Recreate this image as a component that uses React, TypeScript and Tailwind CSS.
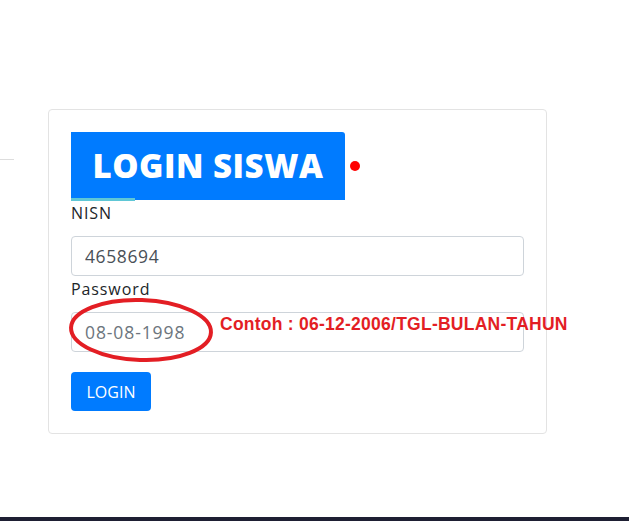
import React from 'react';

const sans = { fontFamily: '"Open Sans", "Noto Sans", sans-serif' };

function Field({ label, children }: { label: string; children: React.ReactNode }) {
  return (
    <div>
      <label className="block text-[16px] leading-[24px] tracking-[0.9px] text-[#212529] mb-[11px]">{label}</label>
      {children}
    </div>
  );
}

export default function App() {
  return (
    <div className="h-[521px] flex flex-col bg-white" style={sans}>
      <div className="flex items-start pt-[109px]">
        <div className="mt-[50px] w-[14px] h-px bg-[#dddddd]" />
        <div className="ml-[34px] w-[499px] border border-[#e3e3e3] rounded-[4px] px-[22px] pt-[22px] pb-[22px]">
          <div className="flex items-center">
            <div className="relative w-[274px] h-[68px] bg-[#007bff] rounded-tr-[3px] flex items-center justify-center">
              <h1 className="text-white text-[33px] font-extrabold tracking-[0.5px]">LOGIN SISWA</h1>
              <span className="absolute left-0 bottom-[-1px] w-[64px] h-[3px] bg-[#5fc7d6]" />
            </div>
            <span className="ml-[5px] w-[10px] h-[10px] rounded-full bg-[#ff0000]" />
          </div>

          <div className="mt-[1px]">
            <Field label="NISN">
              <input
                readOnly
                value="4658694"
                className="w-[453px] h-[40px] border border-[#ced4da] rounded-[4px] px-[13px] text-[17.5px] tracking-[0.6px] text-[#495057] outline-none"
              />
            </Field>
          </div>

          <div className="mt-[1px]">
            <Field label="Password">
              <div className="relative">
                <input
                  readOnly
                  placeholder="08-08-1998"
                  className="w-[453px] h-[40px] border border-[#ced4da] rounded-[4px] px-[13px] text-[17.5px] tracking-[0.9px] text-[#495057] placeholder:text-[#6c757d] outline-none"
                />
                <svg className="absolute left-[-4px] top-[-16px]" width="148" height="68" viewBox="0 0 148 68">
                  <ellipse
                    cx="74"
                    cy="34"
                    rx="70"
                    ry="30"
                    fill="none"
                    stroke="#e31e24"
                    strokeWidth="4"
                    transform="rotate(2 74 34)"
                  />
                </svg>
                <span
                  className="absolute left-[149px] top-[2px] text-[17.5px] leading-[20px] tracking-[0.25px] font-bold text-[#e31e24] whitespace-nowrap"
                  style={{ fontFamily: '"Liberation Sans", Arial, sans-serif' }}
                >
                  Contoh : 06-12-2006/TGL-BULAN-TAHUN
                </span>
              </div>
            </Field>
          </div>

          <button className="mt-[20px] w-[80px] h-[39px] bg-[#007bff] rounded-[4px] text-white text-[16px]">
            LOGIN
          </button>
        </div>
      </div>
      <div className="flex-1" />
      <div className="h-[4px] bg-[#1e1f33]" />
    </div>
  );
}
